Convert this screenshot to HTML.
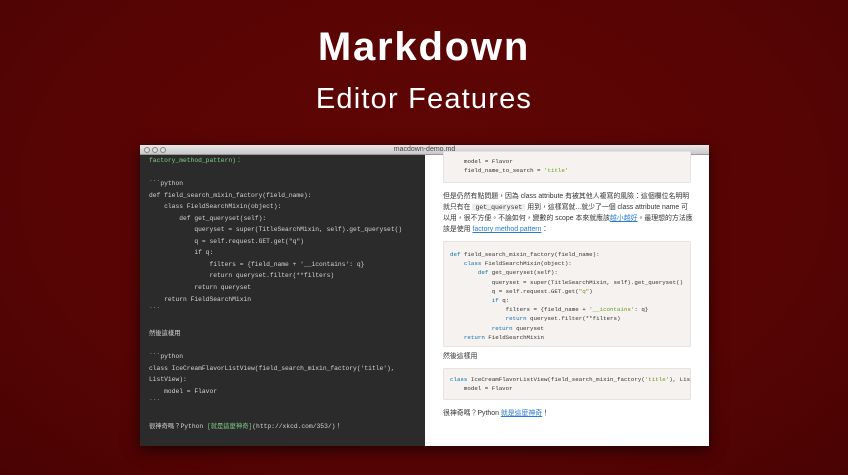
<!DOCTYPE html>
<html><head><meta charset="utf-8"><style>
*{margin:0;padding:0;box-sizing:border-box}
body{width:848px;height:475px;overflow:hidden;background:radial-gradient(ellipse at 50% 40%,#600606 0%,#580404 60%,#4a0303 100%);font-family:"Liberation Sans","Noto Sans CJK TC",sans-serif;position:relative}
.t1{position:absolute;top:25px;left:0;width:848px;text-align:center;color:#fff;font-weight:bold;font-size:40px;letter-spacing:1.8px}
.t2{position:absolute;top:83px;left:0;width:848px;text-align:center;color:#fff;font-size:29px;letter-spacing:1.2px}
.win{position:absolute;left:140px;top:145px;width:569px;height:301px;background:#fff;box-shadow:0 4px 14px rgba(0,0,0,.6);overflow:hidden}
.bar{height:10px;background:linear-gradient(#e8e8e8,#c9c9c9);border-bottom:1px solid #999;font-size:7px;color:#444;text-align:center;line-height:10px;position:relative}
.dots{position:absolute;left:4px;top:2px}
.dots i{display:inline-block;width:6px;height:6px;border-radius:50%;border:1px solid #888;margin-right:2px;background:#ddd}
.left{position:absolute;left:0;top:10px;width:285px;height:291px;background:#2b2b2b;color:#d4d4d4;font-family:"Liberation Mono","Noto Sans CJK TC",monospace;font-size:6.3px;padding:0 0 0 9px}
.ln{display:block;height:11.55px;line-height:11.55px;white-space:pre;overflow:hidden}
.g{color:#7fd08a}
.right{position:absolute;left:285px;top:10px;width:284px;height:291px;font-size:6.9px;color:#333;padding:0 18px}
.blk{width:248px;background:#f5f2f0;border:1px solid #e6e2de;border-radius:2px;font-family:"Liberation Mono",monospace;font-size:5.8px;color:#333;overflow:hidden}
.bl{display:block;height:9.2px;line-height:9.2px;white-space:pre}
.kw{color:#0a6fa8}.s{color:#689b1d}
.p{display:block;height:11px;line-height:11px;white-space:nowrap}
a{color:#2a7ad4;text-decoration:underline}
</style></head><body>
<div class="t1">Markdown</div>
<div class="t2">Editor Features</div>
<div class="win">
<div class="bar"><span class="dots"><i></i><i></i><i></i></span>macdown-demo.md</div>
<div class="left">
<span class="ln g">factory_method_pattern)：</span>
<span class="ln"> </span>
<span class="ln">&#96;&#96;&#96;python</span>
<span class="ln">def field_search_mixin_factory(field_name):</span>
<span class="ln">    class FieldSearchMixin(object):</span>
<span class="ln">        def get_queryset(self):</span>
<span class="ln">            queryset = super(TitleSearchMixin, self).get_queryset()</span>
<span class="ln">            q = self.request.GET.get("q")</span>
<span class="ln">            if q:</span>
<span class="ln">                filters = {field_name + '__icontains': q}</span>
<span class="ln">                return queryset.filter(**filters)</span>
<span class="ln">            return queryset</span>
<span class="ln">    return FieldSearchMixin</span>
<span class="ln">&#96;&#96;&#96;</span>
<span class="ln"> </span>
<span class="ln">然後這樣用</span>
<span class="ln"> </span>
<span class="ln">&#96;&#96;&#96;python</span>
<span class="ln">class IceCreamFlavorListView(field_search_mixin_factory('title'),</span>
<span class="ln">ListView):</span>
<span class="ln">    model = Flavor</span>
<span class="ln">&#96;&#96;&#96;</span>
<span class="ln"> </span>
<span class="ln">很神奇嗎？Python <span class="g">[就是這麼神奇]</span>(http://xkcd.com/353/)！</span>
</div>
<div class="right">
<div class="blk" style="margin-top:-4px;height:32px;padding:5px 0 0 20px"><span class="bl">model = Flavor</span><span class="bl">field_name_to_search = <span class="s">'title'</span></span></div>
<div style="height:8px"></div>
<span class="p">但是仍然有點問題，因為 class attribute 有被其他人複寫的風險：這個欄位名明明</span>
<span class="p">就只有在 <span style="background:#f0eeec;font-family:'Liberation Mono',monospace;font-size:6.5px;padding:0 3px">get_queryset</span> 用到，這樣寫就...就少了一個 class attribute name 可</span>
<span class="p">以用，很不方便。不論如何，變數的 scope 本來就應該<a>越小越好</a>。最理想的方法應</span>
<span class="p">該是使用 <a>factory method pattern</a>：</span>
<div style="height:6px"></div>
<div class="blk" style="height:106px;padding:8px 0 0 6px">
<span class="bl"><span class="kw">def</span> field_search_mixin_factory(field_name):</span>
<span class="bl">    <span class="kw">class</span> FieldSearchMixin(object):</span>
<span class="bl">        <span class="kw">def</span> get_queryset(self):</span>
<span class="bl">            queryset = super(TitleSearchMixin, self).get_queryset()</span>
<span class="bl">            q = self.request.GET.get(<span class="s">"q"</span>)</span>
<span class="bl">            <span class="kw">if</span> q:</span>
<span class="bl">                filters = {field_name + <span class="s">'__icontains'</span>: q}</span>
<span class="bl">                <span class="kw">return</span> queryset.filter(**filters)</span>
<span class="bl">            <span class="kw">return</span> queryset</span>
<span class="bl">    <span class="kw">return</span> FieldSearchMixin</span>
</div>
<div style="height:4px"></div>
<span class="p">然後這樣用</span>
<div style="height:6px"></div>
<div class="blk" style="height:32px;padding:6px 0 0 6px">
<span class="bl"><span class="kw">class</span> IceCreamFlavorListView(field_search_mixin_factory(<span class="s">'title'</span>), ListView):</span>
<span class="bl">    model = Flavor</span>
</div>
<div style="height:8px"></div>
<span class="p">很神奇嗎？Python <a>就是這麼神奇</a>！</span>
</div>
</div>
</body></html>
